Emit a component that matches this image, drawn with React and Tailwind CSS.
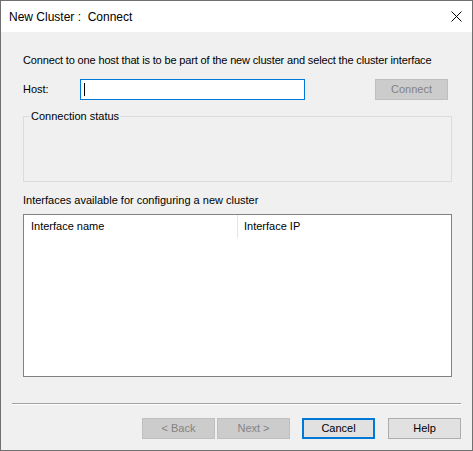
export default function App() {
  const font = { fontFamily: '"Liberation Sans", Arial, sans-serif' };
  return (
    <div className="flex h-[451px] w-[473px] flex-col border border-[#707070] bg-[#f0f0f0] text-black" style={font}>
      <div className="flex h-[31px] shrink-0 items-center justify-between bg-white pl-[8px] pr-[9px]">
        <span className="text-[12px] whitespace-pre">New Cluster :  Connect</span>
        <svg width="11" height="11" viewBox="0 0 11 11" className="mr-[1px]">
          <path d="M0.5 0.5 L10.5 10.5 M10.5 0.5 L0.5 10.5" stroke="#000" strokeWidth="1" />
        </svg>
      </div>

      <div className="flex flex-1 flex-col px-[22px] text-[11px]">
        <p className="mt-[22px] h-[13px] leading-[13px] tracking-[-0.15px]">
          Connect to one host that is to be part of the new cluster and select the cluster interface
        </p>

        <div className="mt-[12px] flex h-[21px] items-center">
          <span className="w-[57px] leading-[13px]">Host:</span>
          <div className="flex h-[21px] w-[225px] items-center border border-[#0078d7] bg-white pl-[3px]">
            <span className="h-[13px] w-px bg-black" />
          </div>
          <div className="ml-auto mr-[2px] flex h-[21px] w-[73px] items-center justify-center border border-[#bfbfbf] bg-[#cccccc] text-[#838383]">
            Connect
          </div>
        </div>

        <div className="relative mt-[16px] h-[66px] w-[429px] border border-[#dcdcdc]">
          <span className="absolute left-[6px] top-[-7px] bg-[#f0f0f0] px-[1px] leading-[13px]">
            Connection status
          </span>
        </div>

        <p className="mt-[12px] leading-[13px]">Interfaces available for configuring a new cluster</p>

        <div className="mt-[7px] h-[163px] w-[429px] border border-[#828282] bg-white">
          <div className="flex h-[23px] items-center">
            <span className="w-[213px] pl-[7px]">Interface name</span>
            <span className="h-[23px] w-px bg-[#e5e5e5]" />
            <span className="pl-[6px]">Interface IP</span>
          </div>
        </div>

        <div className="mx-[-11px] mt-[26px] h-[2px] border-t border-[#a0a0a0] border-b border-b-white" />

        <div className="mr-[-11px] mt-[13px] flex justify-end gap-[2px]">
          <div className="flex h-[21px] w-[73px] items-center justify-center border border-[#bfbfbf] bg-[#cccccc] text-[#838383]">
            &lt; Back
          </div>
          <div className="flex h-[21px] w-[73px] items-center justify-center border border-[#bfbfbf] bg-[#cccccc] text-[#838383]">
            Next &gt;
          </div>
          <div className="ml-[10px] flex h-[21px] w-[73px] items-center justify-center border-2 border-[#0078d7] bg-[#e1e1e1]">
            Cancel
          </div>
          <div className="ml-[11px] flex h-[21px] w-[73px] items-center justify-center border border-[#adadad] bg-[#e1e1e1]">
            Help
          </div>
        </div>
      </div>
    </div>
  );
}
